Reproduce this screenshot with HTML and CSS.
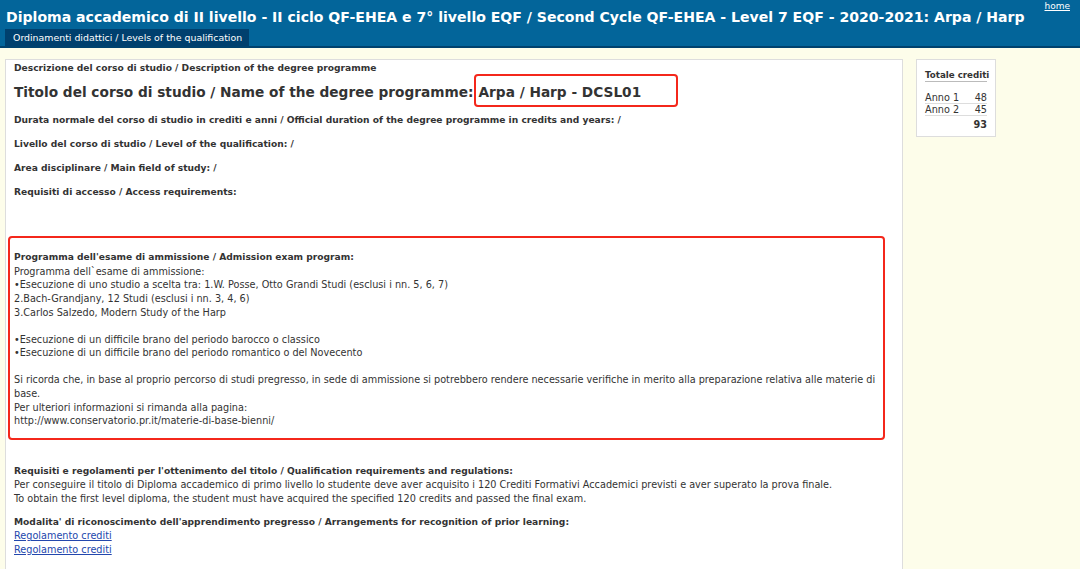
FILE: index.html
```html
<!DOCTYPE html>
<html lang="it">
<head>
<meta charset="utf-8">
<title>Arpa / Harp</title>
<link rel="stylesheet" href="styles.css">
</head>
<body>
<header class="top">
  <div class="top-row">
    <h1 class="title">Diploma accademico di II livello - II ciclo QF-EHEA e 7° livello EQF / Second Cycle QF-EHEA - Level 7 EQF - 2020-2021: Arpa / Harp</h1>
    <a class="home" href="#">home</a>
  </div>
  <nav class="tabs"><span class="tab">Ordinamenti didattici / Levels of the qualification</span></nav>
</header>
<div class="layout">
  <main class="panel">
    <p class="label first">Descrizione del corso di studio / Description of the degree programme</p>
    <h2 class="name"><span>Titolo del corso di studio / Name of the degree programme:</span><span class="mark">Arpa / Harp - DCSL01</span></h2>
    <p class="label">Durata normale del corso di studio in crediti e anni / Official duration of the degree programme in credits and years: /</p>
    <p class="label">Livello del corso di studio / Level of the qualification: /</p>
    <p class="label">Area disciplinare / Main field of study: /</p>
    <p class="label">Requisiti di accesso / Access requirements:</p>
    <section class="exam">
      <p class="label tight">Programma dell'esame di ammissione / Admission exam program:</p>
      <p class="text">Programma dell`esame di ammissione:<br>
      •Esecuzione di uno studio a scelta tra: 1.W. Posse, Otto Grandi Studi (esclusi i nn. 5, 6, 7)<br>
      2.Bach-Grandjany, 12 Studi (esclusi i nn. 3, 4, 6)<br>
      3.Carlos Salzedo, Modern Study of the Harp<br>
      <br>
      •Esecuzione di un difficile brano del periodo barocco o classico<br>
      •Esecuzione di un difficile brano del periodo romantico o del Novecento<br>
      <br>
      Si ricorda che, in base al proprio percorso di studi pregresso, in sede di ammissione si potrebbero rendere necessarie verifiche in merito alla preparazione relativa alle materie di base.<br>
      Per ulteriori informazioni si rimanda alla pagina:<br>
      http://www.conservatorio.pr.it/materie-di-base-bienni/</p>
    </section>
    <p class="label tight">Requisiti e regolamenti per l'ottenimento del titolo / Qualification requirements and regulations:</p>
    <p class="text">Per conseguire il titolo di Diploma accademico di primo livello lo studente deve aver acquisito i 120 Crediti Formativi Accademici previsti e aver superato la prova finale.<br>
    To obtain the first level diploma, the student must have acquired the specified 120 credits and passed the final exam.</p>
    <p class="label tight">Modalita' di riconoscimento dell'apprendimento pregresso / Arrangements for recognition of prior learning:</p>
    <p class="text"><a href="#">Regolamento crediti</a><br><a href="#">Regolamento crediti</a></p>
  </main>
  <aside class="credits">
    <div class="credits-head">Totale crediti</div>
    <div class="credits-row"><span>Anno 1</span><span>48</span></div>
    <div class="credits-row"><span>Anno 2</span><span>45</span></div>
    <div class="credits-total">93</div>
  </aside>
</div>
</body>
</html>
```
FILE: styles.css
```css
html, body {
  margin: 0;
  padding: 0;
}
body {
  background: #fdfdea;
  font-family: "DejaVu Sans", Verdana, sans-serif;
  font-size: 9.7px;
  line-height: 13.6px;
  color: #333;
  height: 569px;
  overflow: hidden;
}
.top {
  background: #03659a;
  border-bottom: 2px solid #00426e;
  height: 46px;
  padding: 0 0 0 5px;
  display: flex;
  flex-direction: column;
}
.top-row {
  display: flex;
  align-items: flex-start;
  justify-content: space-between;
}
.title {
  margin: 0;
  padding: 8px 0 0 1px;
  color: #fff;
  font-size: 14.07px;
  line-height: 18px;
  font-weight: bold;
  white-space: nowrap;
}
.home {
  color: #fff;
  font-size: 9px;
  line-height: 10px;
  margin: 1px 10px 0 0;
}
.tabs {
  margin-top: auto;
  display: flex;
}
.tab {
  background: #00406e;
  color: #fff;
  font-size: 9.4px;
  line-height: 17px;
  padding: 0 7px 0 8px;
}
.layout {
  display: flex;
  align-items: flex-start;
  gap: 13px;
  padding: 11px 0 0 5px;
}
.panel {
  width: 880px;
  min-height: 560px;
  background: #fff;
  border: 1px solid #ddd;
  padding: 2px 8px 0 8px;
}
.label {
  font-weight: bold;
  font-size: 9.15px;
  margin: 0 0 10.4px;
}
.label.first {
  margin: 0;
}
.label.tight {
  margin: 0;
}
.name {
  display: flex;
  align-items: baseline;
  margin: -2px 0 7px;
  font-size: 13.7px;
  line-height: 19px;
  font-weight: bold;
  color: #333;
}
.mark {
  border: 2px solid #f4271b;
  border-radius: 4px;
  padding: 7px 35px 3px 3px;
}
.exam {
  border: 2px solid #f4271b;
  border-radius: 4px;
  margin: 37px 9px 25px -6px;
  padding: 13px 4px 10px 4px;
}
.exam .text {
  margin: 0;
}
.text {
  margin: 0 0 10px;
}
.text a {
  color: #2347ad;
}
.credits {
  width: 62px;
  background: #fff;
  border: 1px solid #ddd;
  padding: 9px 8px 5px 8px;
}
.credits-head {
  font-weight: bold;
  font-size: 8.7px;
  white-space: nowrap;
  line-height: 12px;
  border-bottom: 1px solid #bbb;
  margin-bottom: 10px;
}
.credits-row {
  display: flex;
  justify-content: space-between;
  border-bottom: 1px solid #ddd;
  line-height: 11px;
}
.credits-total {
  font-weight: bold;
  text-align: right;
  line-height: 13px;
  margin-top: 2px;
}
```
